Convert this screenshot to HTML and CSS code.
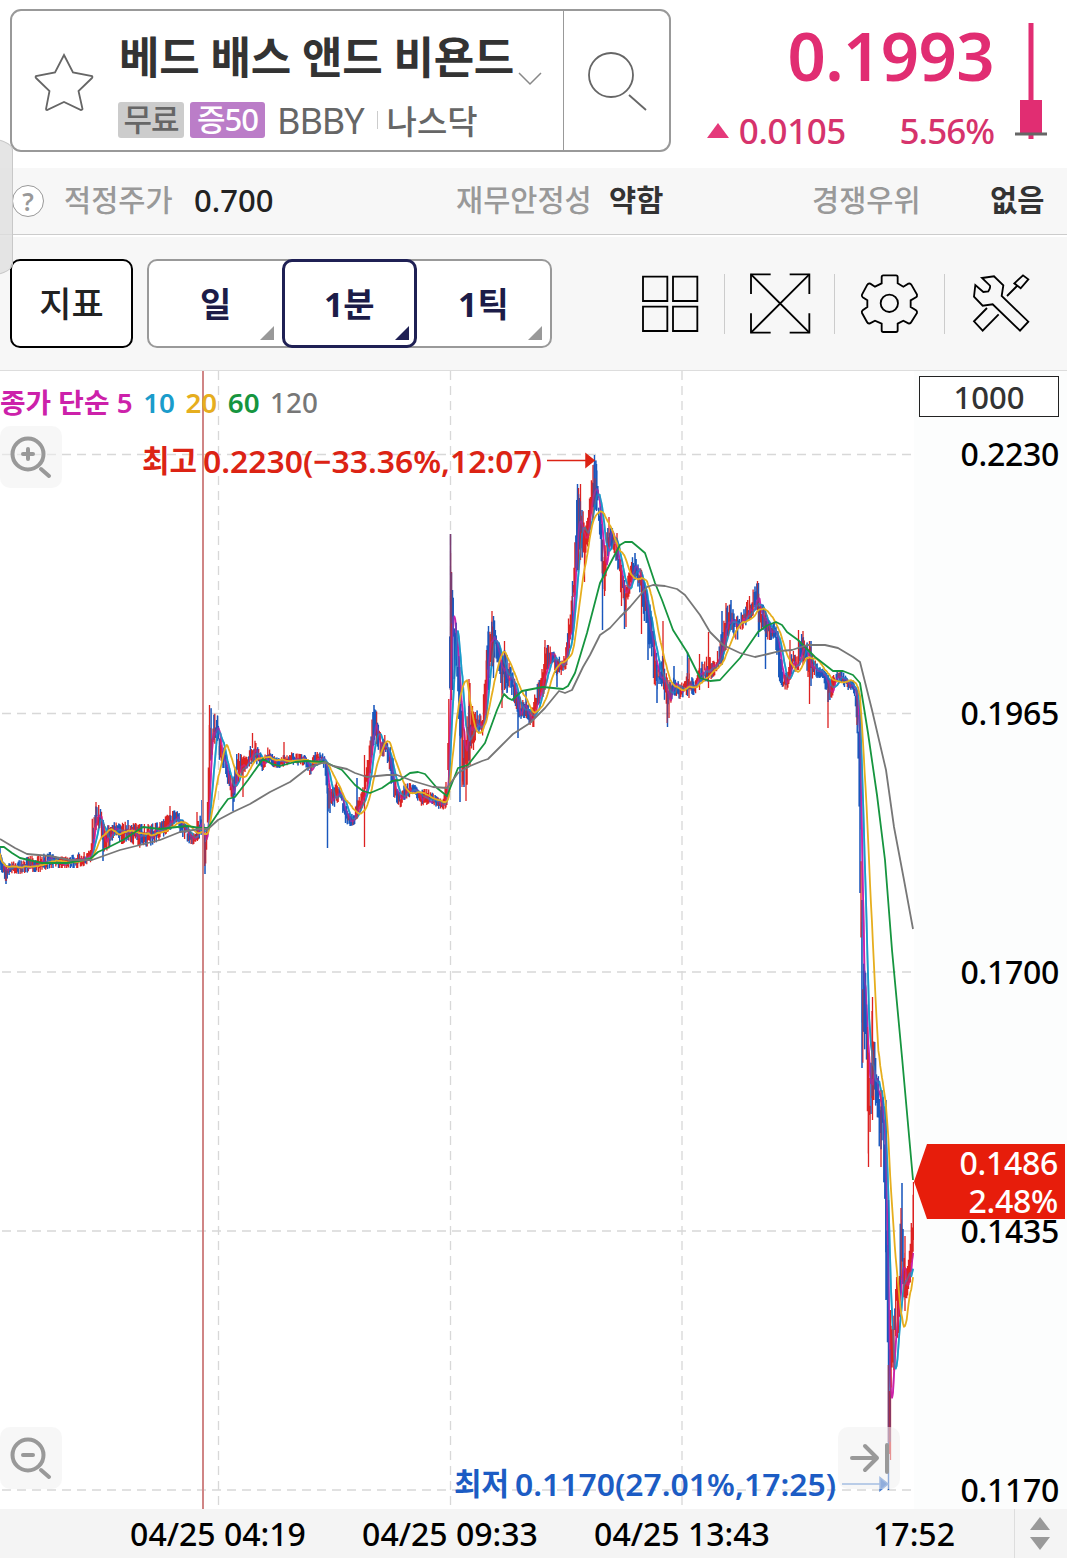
FILE: index.html
```
<!DOCTYPE html>
<html lang="ko">

<head>
    <meta charset="UTF-8">
    <meta name="viewport" content="width=device-width, initial-scale=1.0">
    <title>베드 배스 앤드 비욘드</title>
    <link rel="stylesheet" href="styles.css">
</head>

<body>
    <div class="app">
        <div class="drawer"></div>
        <header class="header">
            <div class="search">
                <svg class="star" width="62" height="62" viewBox="0 0 62 62">
                    <path d="M31 3 L40 20.500 L59 24 Q60 25 59 26 L45.500 39 L49.500 57 Q49 58 48 58 L31 50 L14 58 Q13 58 13 57 L16.500 39 L3 26 Q2 25 3 24 L22 20.500 Z" />
                </svg>
                <div class="stock">
                    <div class="name">베드 배스 앤드 비욘드</div>
                    <div class="tags">
                        <span class="tag free">무료</span>
                        <span class="tag margin">증50</span>
                        <span class="code">BBBY</span>
                        <span class="bar"></span>
                        <span class="market">나스닥</span>
                    </div>
                </div>
                <svg class="down" width="26" height="16" viewBox="0 0 26 16">
                    <path d="M2 2 L13 13 L24 2" />
                </svg>
                <div class="find">
                    <svg width="62" height="62" viewBox="0 0 62 62">
                        <circle cx="26" cy="26" r="22" />
                        <path d="M44 46 L61 61" />
                    </svg>
                </div>
            </div>
            <div class="quote">
                <div class="price">0.1993</div>
                <div class="change">
                    <span class="up"></span>
                    <span class="diff">0.0105</span>
                    <span class="rate">5.56%</span>
                </div>
            </div>
            <svg class="candle" width="32" height="120" viewBox="0 0 32 120">
                <rect x="13.500" y="3" width="5" height="116" />
                <rect x="5" y="80" width="22" height="34" />
                <rect class="base" x="0" y="112.500" width="32" height="3" />
            </svg>
        </header>

        <div class="info">
            <span class="help">?</span>
            <span class="label l1">적정주가</span>
            <span class="value v1">0.700</span>
            <span class="label l2">재무안정성</span>
            <span class="value v2">약함</span>
            <span class="label l3">경쟁우위</span>
            <span class="value v3">없음</span>
        </div>

        <div class="toolbar">
            <div class="btn">지표</div>
            <div class="tabs">
                <div class="tab">일</div>
                <div class="tab on">1분</div>
                <div class="tab">1틱</div>
            </div>
            <div class="icons">
                <div class="icon">
                    <svg viewBox="234 112 189 189">
                        <path d="M249 126h73v73h-73z M339 126h73v73h-73z M249 216h73v73h-73z M339 216h73v73h-73z" />
                    </svg>
                </div>
                <div class="icon">
                    <svg viewBox="564 112 189 189">
                        <path d="M573 178 V119 H632 M689 119 H748 V178 M748 236 V294 H689 M632 294 H573 V236" />
                        <path d="M573 119 L748 294 M748 119 L573 294" />
                    </svg>
                </div>
                <div class="icon">
                    <svg viewBox="894 112 189 189">
                        <path d="M970 122 H1008 Q1013 122 1013 127 V146 L1030 156 L1045 147 Q1051 145 1054 150 L1071 180 Q1072 185 1068 188 L1052 197 V217 L1068 227 Q1072 230 1071 235 L1054 262 Q1051 268 1045 266 L1030 258 L1013 267 V287 Q1013 292 1008 292 H970 Q965 292 965 287 V267 L945 258 L930 266 Q924 268 921 262 L906 235 Q904 230 908 227 L922 217 V197 L908 188 Q904 185 906 180 L922 150 Q925 145 931 147 L945 156 L965 146 V127 Q965 122 970 122 Z" />
                        <circle cx="988" cy="206" r="26" />
                    </svg>
                </div>
                <div class="icon">
                    <svg viewBox="1224 112 189 189">
                        <path d="M1266 130 L1302 125 L1330 152 L1325 184 L1405 261 L1380 288 L1298 209 L1268 213 L1242 186 L1246 151 L1270 172 L1285 170 Q1292 160 1290 153 Z" />
                        <path d="M1341 184 L1371 154 M1363 146 L1389 122 L1405 134 L1382 161 Z" />
                        <path d="M1281 220 L1242 260 L1268 288 L1316 239" />
                    </svg>
                </div>
            </div>
        </div>

        <main class="chart">
            <div class="plot">
                <!-- y is kept in page pixels, the plot starts at 371 -->
                <svg id="graph" width="914" height="1138" viewBox="0 371 914 1138">
                    <g class="grid">
                        <path d="M2 454.500H914 M2 713.500H914 M2 972H914 M2 1231H914 M2 1490H914" />
                        <path d="M218.500 371V1509 M450.500 371V1509 M682 371V1509" />
                    </g>
                    <g id="lines"></g>
                    <path class="day" d="M203 371V1509" />
                    <g class="high">
                        <text x="142" y="472" textLength="55" lengthAdjust="spacingAndGlyphs">최고</text>
                        <text x="203" y="473" textLength="339" lengthAdjust="spacingAndGlyphs">0.2230(−33.36%,12:07)</text>
                        <path d="M547 460.500H588" />
                        <path class="head" d="M586 454 L594 460.500 L586 467 Z" />
                    </g>
                    <g class="low">
                        <text x="454" y="1495" textLength="55" lengthAdjust="spacingAndGlyphs">최저</text>
                        <text x="515" y="1496" textLength="321" lengthAdjust="spacingAndGlyphs">0.1170(27.01%,17:25)</text>
                        <path d="M842 1484H882" />
                        <path class="head" d="M880 1477.500 L888 1484 L880 1490.500 Z" />
                    </g>
                </svg>
                <div class="legend">
                    <span class="m5">종가 단순 5</span>
                    <span class="m10">10</span>
                    <span class="m20">20</span>
                    <span class="m60">60</span>
                    <span class="m120">120</span>
                </div>
                <div class="zoom in">
                    <svg width="62" height="62" viewBox="0 0 62 62">
                        <circle cx="28" cy="28" r="15.500" />
                        <path d="M23 28H33 M28 23V33 M41 43L49 50" />
                    </svg>
                </div>
                <div class="zoom out">
                    <svg width="62" height="62" viewBox="0 0 62 62">
                        <circle cx="28" cy="28" r="15.500" />
                        <path d="M23 28H33 M41 43L49 50" />
                    </svg>
                </div>
                <div class="zoom last">
                    <svg width="62" height="62" viewBox="0 0 62 62">
                        <path d="M14 31H39 M27 19L39 31L27 43 M49 18V45" />
                    </svg>
                </div>
            </div>
            <aside class="axis">
                <div class="count">1000</div>
                <div class="ticks">
                    <span>0.2230</span>
                    <span>0.1965</span>
                    <span>0.1700</span>
                    <span>0.1435</span>
                    <span>0.1170</span>
                </div>
                <div class="now">
                    <span>0.1486</span>
                    <span>2.48%</span>
                </div>
            </aside>
        </main>

        <footer class="times">
            <span class="time">04/25 04:19</span>
            <span class="time">04/25 09:33</span>
            <span class="time">04/25 13:43</span>
            <span class="time end">17:52</span>
            <div class="sort">
                <i class="tri-up"></i>
                <i class="tri-down"></i>
            </div>
        </footer>
    </div>
    <script src="chart.js"></script>
</body>

</html>
```

FILE: styles.css
```
body {
    margin: 0;
    background-color: #fff;
    font-family: "Noto Sans", "Noto Sans CJK KR", sans-serif;
    font-weight: 500;
    color: #000;
}

.app {
    position: relative;
    width: 1067px;
    height: 1558px;
    overflow: hidden;
    white-space: nowrap;
}

svg {
    display: block;
    fill: none;
}

.drawer {
    position: absolute;
    z-index: 5;
    left: -20px;
    top: 138px;
    width: 31px;
    height: 136px;
    background-color: rgba(222, 222, 222, 0.8);
    border: #c8c8c8 solid 1.5px;
    border-radius: 0 28px 28px 0 / 0 12px 12px 0;
}

/* header */
.header {
    display: flex;
    height: 168px;
    box-sizing: border-box;
    padding: 9px 0 0 10px;
}

.search {
    display: flex;
    width: 661px;
    height: 143px;
    box-sizing: border-box;
    border: #999 solid 2px;
    border-radius: 11px;
}

.star {
    margin: 41px 0 0 21px;
    stroke: #666;
    stroke-width: 1.8;
}

.stock {
    width: 397px;
    margin-left: 24px;
}

.name {
    height: 91px;
    line-height: 93px;
    font-size: 44px;
    font-weight: 700;
    color: #333;
    letter-spacing: -0.3px;
}

.tags {
    display: flex;
    align-items: center;
    height: 36px;
    margin-left: -1px;
    font-size: 33px;
    color: #666;
}

.tag {
    height: 36px;
    line-height: 34px;
    border-radius: 3px;
    text-align: center;
    font-size: 31px;
    letter-spacing: -1px;
}

.free {
    width: 66px;
    background-color: #ccc;
}

.margin {
    width: 75px;
    margin-left: 6px;
    background-color: #bb7dc8;
    color: #fff;
}

.code {
    margin-left: 12px;
    font-size: 36px;
    font-weight: 400;
    letter-spacing: -1px;
}

.bar {
    width: 1px;
    height: 18px;
    margin: 0 9px 0 13px;
    background-color: #ccc;
}

.down {
    margin: 60px 0 0 1px;
    stroke: #888;
    stroke-width: 1.5;
}

.find {
    margin-left: auto;
    width: 105px;
    border-left: #999 solid 1px;
}

.find svg {
    margin: 38px 0 0 21px;
    stroke: #666;
    stroke-width: 1.8;
    overflow: visible;
}

.quote {
    width: 323px;
    color: #e12d72;
    text-align: right;
}

.price {
    height: 92px;
    line-height: 92px;
    font-size: 67px;
    font-weight: 600;
    letter-spacing: -0.6px;
}

.change {
    display: flex;
    align-items: center;
    justify-content: flex-end;
    height: 58px;
    font-size: 35px;
    letter-spacing: -0.4px;
    color: #d6336c;
}

.up {
    margin: 0 10px 0 0;
    border: transparent solid 11px;
    border-top: 0;
    border-bottom: #e5397a solid 15px;
}

.rate {
    width: 148px;
    letter-spacing: -1px;
}

.candle {
    margin: 11px 0 0 21px;
    fill: #e12d72;
}

.candle .base {
    fill: #666;
}

/* company info */
.info {
    display: flex;
    align-items: center;
    height: 66px;
    background-color: #f7f7f7;
    border-bottom: #ccc solid 1px;
    font-size: 29.5px;
    line-height: 64px;
}

.help {
    width: 30px;
    height: 30px;
    margin-left: 12px;
    border: #999 solid 1.5px;
    border-radius: 50%;
    background-color: #fff;
    color: #999;
    font-size: 25px;
    font-weight: 600;
    line-height: 30px;
    text-align: center;
}

.label,
.value {
    height: 66px;
}

.label {
    color: #999;
}

.value {
    color: #333;
}

.l1 {
    width: 130px;
    margin-left: 20px;
}

.v1 {
    width: 262px;
    font-size: 31px;
    color: #222;
}

.l2 {
    width: 153px;
}

.v2 {
    width: 203px;
    font-weight: 700;
}

.l3 {
    width: 178px;
}

.v3 {
    font-weight: 700;
}

/* toolbar */
.toolbar {
    display: flex;
    align-items: center;
    height: 133px;
    margin-top: 2px;
    padding-left: 10px;
    background-color: #f7f7f7;
    border-bottom: #ddd solid 1px;
    box-shadow: 0 -2px 0 #fff;
    font-size: 34px;
}

.btn {
    width: 119px;
    height: 85px;
    line-height: 86px;
    border: #000 solid 2px;
    border-radius: 10px;
    background-color: #fff;
    color: #222;
    text-align: center;
    font-size: 35px;
}

.tabs {
    display: flex;
    width: 401px;
    height: 85px;
    margin-left: 14px;
    border: #999 solid 2px;
    border-radius: 10px;
    background-color: #fff;
}

.tab {
    position: relative;
    width: 133.5px;
    line-height: 86px;
    color: #1c1c48;
    font-weight: 700;
    text-align: center;
}

.tab::after {
    content: "";
    position: absolute;
    right: 8px;
    bottom: 6px;
    border-left: transparent solid 14px;
    border-bottom: #999 solid 14px;
}

.tab.on {
    box-sizing: border-box;
    width: 135px;
    margin: -2px 0 -2px -0.5px;
    border: #1f2054 solid 3px;
    border-radius: 10px;
    line-height: 84px;
}

.tab.on::after {
    right: 5px;
    bottom: 5px;
    border-bottom-color: #1f2054;
}

.icons {
    display: flex;
    margin-left: 62px;
}

.icon {
    display: flex;
    justify-content: center;
    align-items: center;
    width: 109px;
    height: 60px;
    border-left: #ccc solid 1px;
}

.icon:first-child {
    border-left-color: transparent;
}

.icon svg {
    width: 63px;
    height: 63px;
    stroke: #000;
    stroke-width: 5.5;
}

/* chart */
.chart {
    display: flex;
    height: 1138px;
}

.plot {
    position: relative;
    width: 914px;
}

.grid path {
    stroke: #d8d8d8;
    stroke-width: 1.3;
    stroke-dasharray: 9 6;
}

.day {
    stroke: #d08585;
    stroke-width: 2;
}

.line {
    stroke-width: 1.8;
    stroke-linejoin: round;
}

.line5 {
    stroke: #cc21aa;
}

.line10 {
    stroke: #1a9ccb;
}

.line20 {
    stroke: #e6ae1e;
}

.line60 {
    stroke: #16953f;
}

.line120 {
    stroke: #777;
}

.bar-up {
    stroke: #dc2222;
    stroke-width: 1.3;
}

.bar-down {
    stroke: #1957bd;
    stroke-width: 1.3;
}

.front {
    opacity: 0.5;
}

.high text,
.low text {
    font-size: 31px;
    font-weight: 600;
}

.high text,
.high .head {
    fill: #dc2314;
}

.high path {
    stroke: #dc2314;
    stroke-width: 1.5;
}

.low text,
.low .head {
    fill: #1c5cc4;
}

.low path {
    stroke: #4a7fd0;
    stroke-width: 1.5;
}

.legend {
    position: absolute;
    left: 0;
    top: 11px;
    display: flex;
    gap: 10.5px;
    line-height: 40px;
    font-size: 27.8px;
    font-weight: 600;
}

.m5 {
    color: #cc21aa;
}

.m10 {
    color: #1a9ccb;
}

.m20 {
    color: #e6ae1e;
}

.m60 {
    color: #16953f;
}

.m120 {
    color: #777;
    font-weight: 500;
}

.zoom {
    position: absolute;
    left: 0;
    width: 62px;
    height: 62px;
    border-radius: 10px;
    background-color: rgba(240, 240, 240, 0.55);
}

.zoom svg {
    stroke: #999;
    stroke-width: 4;
    stroke-linecap: round;
    stroke-linejoin: round;
}

.in {
    top: 55px;
}

.out {
    top: 1056px;
}

.last {
    left: 838px;
    top: 1056px;
}

.axis {
    position: relative;
    width: 153px;
    background-color: #fcfdfd;
}

.count {
    width: 138px;
    height: 39px;
    margin: 5px 0 0 5px;
    border: #222 solid 1.5px;
    background-color: #fff;
    line-height: 40px;
    font-size: 31px;
    color: #333;
    text-align: center;
}

.ticks {
    display: flex;
    flex-direction: column;
    gap: 219px;
    margin-top: 17px;
    padding-right: 8px;
    line-height: 40px;
    font-size: 32px;
    letter-spacing: -0.3px;
    text-align: right;
}

.now {
    position: absolute;
    left: 0;
    top: 773px;
    display: flex;
    flex-direction: column;
    width: 144px;
    height: 75px;
    padding-right: 7px;
    background-color: #e71d0b;
    clip-path: polygon(0 50%, 13px 0, 100% 0, 100% 100%, 13px 100%);
    color: #fff;
    font-size: 32px;
    letter-spacing: -0.3px;
    line-height: 38px;
    text-align: right;
}

/* time axis */
.times {
    display: flex;
    height: 49px;
    padding-left: 102px;
    background-color: #f4f4f4;
    line-height: 50px;
    font-size: 32px;
}

.time {
    width: 232px;
    text-align: center;
}

.end {
    width: 232px;
    margin-right: -16px;
}

.sort {
    display: flex;
    flex-direction: column;
    align-items: center;
    justify-content: center;
    gap: 7px;
    width: 49px;
    border-left: #ddd solid 1px;
}

.tri-up,
.tri-down {
    border: transparent solid 10px;
}

.tri-up {
    border-top: 0;
    border-bottom: #999 solid 13px;
}

.tri-down {
    border-bottom: 0;
    border-top: #999 solid 13px;
}
```

FILE: chart.js
```
// x, top, bottom of the price band
var band = [
    [0, 848, 868], [6, 864, 882], [10, 862, 873], [20, 860, 874], [30, 856, 872], [40, 855, 872], [50, 852, 868], [60, 856, 868],
    [70, 855, 868], [80, 852, 868], [91, 850, 862], [92, 818, 855], [96, 803, 830], [100, 806, 828], [103, 818, 852], [108, 825, 850],
    [115, 822, 835], [120, 824, 846], [128, 820, 840], [138, 824, 848], [150, 824, 846], [160, 822, 840], [170, 812, 830], [176, 810, 825],
    [181, 815, 835], [188, 825, 843], [195, 835, 845], [198, 820, 840], [202, 808, 835], [205, 834, 872], [207, 825, 855], [209, 728, 805],
    [211, 708, 770], [214, 715, 745], [217, 710, 740], [220, 738, 765], [225, 750, 770], [230, 773, 797], [233, 780, 808], [237, 752, 785],
    [242, 755, 775], [247, 757, 770], [253, 738, 762], [258, 745, 765], [263, 760, 772], [268, 747, 760], [273, 755, 767], [280, 757, 768],
    [290, 752, 764], [300, 754, 766], [305, 755, 765], [310, 763, 776], [315, 752, 765], [320, 752, 762], [325, 755, 770], [328, 780, 815],
    [331, 790, 812], [337, 780, 803], [341, 790, 800], [344, 800, 822], [350, 815, 826], [354, 812, 825], [358, 798, 818], [362, 792, 808],
    [366, 770, 793], [370, 740, 775], [373, 707, 745], [377, 712, 745], [380, 732, 755], [385, 735, 758], [389, 742, 770], [393, 758, 795],
    [397, 788, 803], [401, 795, 808], [404, 784, 800], [410, 783, 797], [415, 785, 794], [420, 789, 806], [428, 789, 805], [435, 795, 806],
    [443, 800, 812], [447, 775, 806], [449, 650, 780], [450, 534, 680], [452, 572, 678], [454, 595, 678], [457, 635, 690], [460, 670, 740],
    [463, 720, 790], [466, 740, 801], [468, 695, 770], [470, 690, 750], [474, 715, 750], [477, 708, 728], [482, 718, 740], [486, 655, 710],
    [488, 628, 678], [490, 632, 678], [492, 613, 665], [495, 622, 670], [498, 632, 662], [502, 658, 698], [504, 648, 685], [507, 660, 692],
    [510, 664, 690], [514, 676, 703], [518, 695, 725], [522, 700, 718], [527, 700, 718], [531, 712, 727], [534, 697, 727], [538, 682, 705],
    [542, 668, 700], [545, 645, 690], [549, 645, 665], [553, 650, 662], [557, 658, 680], [561, 656, 675], [565, 656, 672], [568, 622, 660],
    [571, 602, 640], [574, 565, 600], [576, 515, 590], [577, 488, 565], [580, 500, 550], [583, 510, 560], [585, 530, 578], [587, 520, 550],
    [589, 500, 540], [592, 468, 518], [594, 456, 510], [597, 463, 510], [600, 500, 540], [603, 540, 585], [605, 552, 592], [607, 528, 560],
    [610, 522, 545], [614, 532, 555], [618, 545, 570], [621, 562, 605], [625, 585, 612], [629, 572, 598], [633, 555, 575], [637, 560, 582],
    [641, 568, 600], [645, 585, 625], [650, 605, 655], [655, 642, 688], [658, 668, 690], [663, 655, 685], [667, 677, 725], [670, 682, 705],
    [674, 675, 695], [680, 684, 699], [688, 672, 694], [694, 680, 695], [700, 664, 688], [708, 655, 682], [715, 662, 675], [720, 640, 667],
    [723, 625, 660], [727, 606, 640], [731, 604, 630], [736, 617, 643], [742, 612, 630], [750, 595, 620], [757, 583, 610], [759, 595, 632],
    [764, 606, 630], [768, 620, 640], [775, 622, 640], [779, 635, 680], [783, 675, 688], [787, 672, 691], [790, 658, 680], [793, 645, 668],
    [797, 660, 675], [801, 633, 655], [805, 640, 663], [809, 645, 682], [813, 650, 678], [818, 665, 678], [823, 669, 678], [828, 675, 702],
    [832, 677, 698], [836, 672, 682], [842, 670, 685], [848, 680, 690], [853, 680, 690], [857, 690, 722], [859, 700, 790], [860, 725, 893],
    [861, 840, 1010], [863, 960, 1068], [866, 975, 1040], [868, 1050, 1155], [870, 1060, 1145], [872, 1010, 1120], [874, 1035, 1100],
    [877, 1065, 1110], [880, 1090, 1160], [883, 1090, 1155], [885, 1130, 1220], [886, 1170, 1300], [888, 1250, 1440], [889, 1400, 1488],
    [890, 1320, 1450], [892, 1330, 1380], [894, 1315, 1375], [896, 1270, 1330], [898, 1280, 1340], [900, 1225, 1310], [902, 1210, 1270],
    [904, 1240, 1300], [906, 1270, 1300], [908, 1265, 1295], [910, 1245, 1285], [912, 1210, 1270], [914, 1182, 1240]
];

// single long wicks: x, top, bottom, up(1) or down(0)
var wicks = [
    [6, 868, 884, 0], [96, 802, 830, 1], [103, 820, 861, 0], [170, 806, 826, 1], [197, 812, 840, 1], [202, 800, 830, 0], [205, 834, 874, 0],
    [209.500, 705, 800, 1], [233, 780, 811, 0], [243, 757, 797, 1], [252.500, 733, 748, 1], [284, 742, 762, 1], [327.500, 762, 848, 0],
    [357, 778, 815, 0], [364.500, 755, 847, 1], [374, 705, 740, 0], [450.500, 534, 690, 1], [450.500, 534, 690, 0], [451.500, 572, 700, 1],
    [452.500, 590, 690, 0], [460, 680, 802, 0], [462, 720, 787, 1], [464, 740, 787, 0], [466, 740, 801, 1], [469, 679, 760, 1], [470, 683, 765, 1],
    [486.500, 650, 720, 1], [488.500, 626, 690, 0], [492, 611, 660, 1], [493.500, 616, 678, 0], [502, 660, 708, 1], [504.500, 641, 690, 1],
    [507, 655, 693, 0], [518, 695, 738, 0], [526, 690, 715, 0], [545, 640, 690, 1], [557, 660, 687, 0], [572.500, 581, 640, 0],
    [577.500, 484, 570, 0], [578.500, 488, 570, 1], [580.500, 484, 560, 1], [582, 510, 548, 0], [584.500, 530, 582, 1],
    [593, 465, 520, 1], [594.500, 455, 510, 0], [596.500, 464, 511, 0], [602.500, 540, 630, 0], [604.500, 545, 596, 1], [609, 517, 545, 1],
    [617, 533, 560, 1], [624.500, 580, 629, 0], [626, 585, 627, 1], [635, 553, 580, 0], [641.500, 570, 634, 1], [648, 600, 660, 0],
    [657, 665, 703, 0], [663, 621, 680, 1], [667.500, 690, 727, 0], [669, 680, 718, 1], [674, 666, 690, 0], [687.500, 652, 696, 0],
    [689, 658, 698, 1], [699.500, 654, 690, 1], [708.500, 632, 688, 1], [722, 611, 665, 0], [726, 603, 650, 1], [731, 600, 630, 0],
    [757.500, 581, 610, 1], [758.500, 583, 637, 0], [765.500, 610, 669, 0], [790, 640, 680, 1], [798.500, 630, 670, 1], [803, 631, 665, 1],
    [809.500, 641, 704, 1], [811, 641, 686, 0], [828, 680, 728, 1], [857, 690, 725, 1], [860, 700, 893, 0], [862, 900, 1068, 0],
    [868.500, 1070, 1167, 1], [872.500, 997, 1120, 1], [881, 1090, 1167, 1], [886, 1100, 1300, 0], [888.500, 1200, 1490, 0],
    [890.500, 1310, 1460, 1], [902, 1183, 1250, 0], [901, 1208, 1280, 1], [905, 1236, 1311, 1], [913.500, 1182, 1240, 1]
];

var ma60 = "0,847 4,847 12,853 20,858 42,863 67,863 90,859 98,852 107,848 123,840 143,827 160,829 177,827 187,826 200,828 208,828 220,810 228,799 235,797 248,780 263,759 272,764 280,766 295,762 307,761 325,762 342,770 355,785 363,791 370,793 382,788 392,781 400,780 410,773 418,772 425,774 437,788 447,796 458,768 468,765 485,743 497,710 504,694 508,698 512,700 522,691 543,687 563,689 568,686 575,673 587,633 600,583 612,560 620,545 625,542 632,542 638,547 645,553 655,583 662,600 673,630 687,652 700,678 710,681 720,680 740,658 758,632 768,625 776,622 782,625 787,632 798,640 815,657 833,671 843,671 853,675 860,683 868,733 877,795 885,860 892,950 902,1057 913,1180";
var ma120 = "0,839 15,848 27,854 50,856 70,860 92,860 120,850 140,845 160,840 180,832 200,829 208,829 218,820 233,812 250,804 270,792 290,782 308,768 325,762 333,766 347,769 355,773 367,777 387,775 397,775 413,781 433,787 447,788 458,773 470,766 482,761 488,759 500,747 513,734 530,723 545,708 559,691 565,693 572,690 583,667 590,655 600,635 610,628 620,617 630,607 647,587 653,585 665,586 677,589 685,595 700,615 710,632 723,645 740,653 755,657 768,654 780,651 792,650 807,645 825,645 838,648 853,657 860,662 872,710 886,770 894,827 904,880 913,929";

var seed = 7;
function rand() {
    seed = (seed * 16807) % 2147483647;
    return seed / 2147483647;
}

function bandAt(x) {
    var i = 1;
    while (i < band.length - 1 && band[i][0] < x) i++;
    var a = band[i - 1], b = band[i];
    var t = Math.max(0, Math.min(1, (x - a[0]) / (b[0] - a[0])));
    return [a[1] + (b[1] - a[1]) * t, a[2] + (b[2] - a[2]) * t];
}

var close = [], up = "", down = "";
var step = 914 / 1000;
for (var i = 0; i < 1000; i++) {
    var x = i * step;
    var r = bandAt(x);
    var h = r[1] - r[0];
    var mid = r[0] + h * (0.25 + rand() * 0.5);
    var len = h * (0.15 + rand() * 0.45);
    var top1 = Math.max(r[0], mid - len);
    var end1 = Math.min(r[1], mid + len);
    var seg = "M" + x.toFixed(1) + " " + top1.toFixed(1) + "V" + end1.toFixed(1);
    // direction follows the drift of the band
    var next = bandAt(x + 3);
    var drift = (r[0] + r[1] - next[0] - next[1]) / h;
    if (rand() + drift * 0.3 > 0.5) up += seg; else down += seg;
    close.push((r[0] + r[1]) / 2 + (rand() - 0.5) * h * 0.8);
}
wicks.forEach(function (w) {
    var seg = "M" + w[0] + " " + w[1] + "V" + w[2];
    if (w[3]) up += seg; else down += seg;
});

function average(n) {
    var d = "";
    for (var i = 0; i < close.length; i++) {
        var from = Math.max(0, i - n + 1), sum = 0;
        for (var j = from; j <= i; j++) sum += close[j];
        d += (i ? "L" : "M") + (i * step).toFixed(1) + " " + (sum / (i - from + 1)).toFixed(1);
    }
    return d;
}

// the down bars are laid once more, half transparent, so both colours mix
document.getElementById("lines").innerHTML =
    '<path class="line line5" d="' + average(5) + '"/>' +
    '<path class="line line10" d="' + average(10) + '"/>' +
    '<path class="bar-down" d="' + down + '"/>' +
    '<path class="bar-up" d="' + up + '"/>' +
    '<path class="bar-down front" d="' + down + '"/>' +
    '<path class="line line5 front" d="' + average(5) + '"/>' +
    '<path class="line line10 front" d="' + average(10) + '"/>' +
    '<path class="line line20" d="' + average(20) + '"/>' +
    '<polyline class="line line60" points="' + ma60 + '"/>' +
    '<polyline class="line line120" points="' + ma120 + '"/>';
```
